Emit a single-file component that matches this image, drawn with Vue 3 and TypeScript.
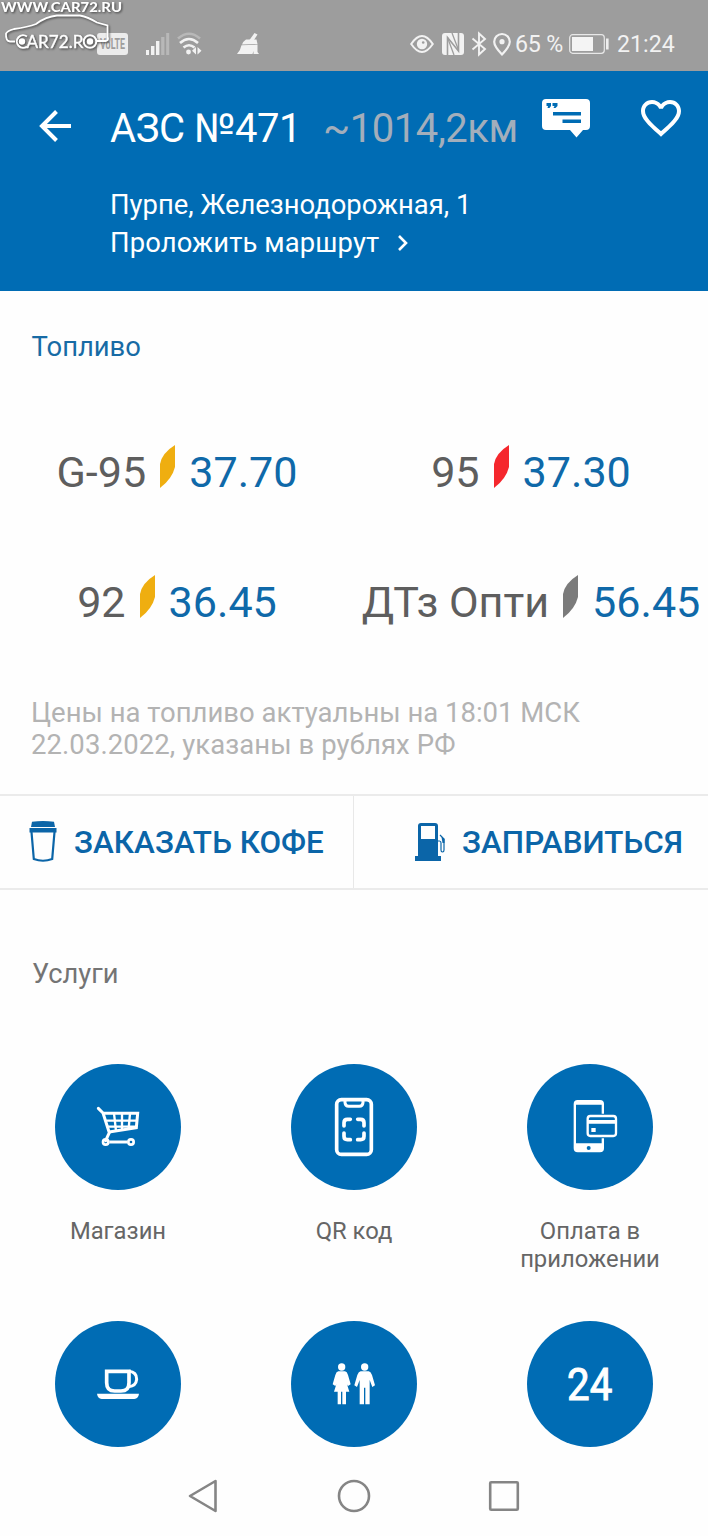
<script setup lang="ts">
interface Fuel {
  name: string
  price: string
  tone: 'gold' | 'red' | 'grey'
}

interface Service {
  id: 'shop' | 'qr' | 'pay' | 'cafe' | 'wc' | 'allday'
  label: string[]
  viewBox: string
}

const fuels: Fuel[] = [
  { name: 'G-95', price: '37.70', tone: 'gold' },
  { name: '95', price: '37.30', tone: 'red' },
  { name: '92', price: '36.45', tone: 'gold' },
  { name: 'ДТз Опти', price: '56.45', tone: 'grey' },
]

const services: Service[] = [
  { id: 'shop', label: ['Магазин'], viewBox: '45 42 378 378' },
  { id: 'qr', label: ['QR код'], viewBox: '33 42 378 378' },
  { id: 'pay', label: ['Оплата в', 'приложении'], viewBox: '51 42 378 378' },
  { id: 'cafe', label: [], viewBox: '45 31 378 378' },
  { id: 'wc', label: [], viewBox: '753 31 378 378' },
  { id: 'allday', label: [], viewBox: '1071 31 378 378' },
]
</script>

<template>
  <div class="screen">
    <div class="status">
      <svg class="volte" width="31" height="22" viewBox="0 0 31 22">
        <rect width="31" height="22" rx="3" fill="#ececec" />
        <text x="3" y="16" font-size="14" font-weight="700" fill="#9d9d9d" textLength="25" lengthAdjust="spacingAndGlyphs">VoLTE</text>
      </svg>
      <svg class="signal" width="24" height="24" viewBox="0 0 24 24">
        <g fill="#f2f2f2">
          <rect x="0" y="18" width="3" height="5" />
          <rect x="5" y="14" width="3.4" height="9" />
          <rect x="10" y="9" width="3.4" height="14" />
        </g>
        <g fill="#b8b8b8">
          <rect x="15.2" y="5" width="3.2" height="18" />
          <rect x="20.2" y="1" width="3" height="22" />
        </g>
      </svg>
      <svg class="wifi" width="26" height="24" viewBox="0 0 26 24" fill="none" stroke-width="2.6">
        <path d="M1 6.500Q12-3 23 6.500" stroke="#b8b8b8" />
        <path d="M3 11Q12 3 21 11M6.500 15.500Q12 11 17.500 15.500" stroke="#f2f2f2" />
        <circle cx="11.500" cy="20" r="2.400" fill="#f2f2f2" />
        <path d="M19 15V22.500L15 18.800ZM20.500 15V22.500L24.500 18.800Z" fill="#f2f2f2" />
      </svg>
      <svg class="broom" width="24" height="22" viewBox="0 0 24 22" fill="#f2f2f2">
        <path d="M17.500 0L20.500 1.500L17 7H12.500Z" />
        <path d="M9 6.500H19.500L20.500 11L5 11.500Q6.500 8 9 6.500Z" />
        <path d="M4.500 12.300L20.500 11.600L20.500 19L22 21H16.500V18L15.500 21H0Q3.500 17.500 4.500 12.300Z" />
      </svg>
      <span class="spacer"></span>
      <svg class="eye" width="24" height="20" viewBox="0 0 24 20">
        <path d="M1.200 10Q12-6 22.800 10Q12 26 1.200 10Z" fill="none" stroke="#f2f2f2" stroke-width="2" />
        <circle cx="12" cy="10" r="5.200" fill="#f2f2f2" />
        <circle cx="13.200" cy="8.500" r="1.300" fill="#9d9d9d" />
      </svg>
      <svg class="nfc" width="22" height="22" viewBox="0 0 22 22">
        <rect width="22" height="22" rx="3" fill="#f2f2f2" />
        <path d="M5.500 22V4.500L16.500 18V0" fill="none" stroke="#9d9d9d" stroke-width="1.600" />
        <path d="M5.500 4.500L12 22M10 0L16.500 17" fill="none" stroke="#9d9d9d" stroke-width="1.300" />
      </svg>
      <svg class="bt" width="16" height="24" viewBox="0 0 16 24">
        <path d="M1.500 6.500L14 17L8 22.500V1.500L14 7L1.500 17.500" fill="none" stroke="#f2f2f2" stroke-width="1.900" />
      </svg>
      <svg class="pin" width="18" height="23" viewBox="0 0 18 23">
        <path d="M9 21.500Q1.200 13.500 1.200 8.800A7.800 7.800 0 0 1 16.800 8.800Q16.800 13.500 9 21.500Z" fill="none" stroke="#f2f2f2" stroke-width="2.200" />
        <circle cx="9" cy="8.700" r="2.600" fill="#f2f2f2" />
      </svg>
      <span class="percent">65 %</span>
      <svg class="battery" width="41" height="20" viewBox="0 0 41 20">
        <rect x=".700" y=".700" width="34.600" height="18.600" rx="3" fill="none" stroke="#e8e8e8" stroke-width="1.200" />
        <rect x="3" y="3" width="21" height="14" fill="#f4f4f4" />
        <rect x="37" y="4.500" width="2.600" height="11" fill="#eeeeee" />
      </svg>
      <span class="clock">21:24</span>
    </div>

    <svg class="stamp" width="135" height="58" viewBox="0 0 135 58">
      <g class="stamp-ink">
        <text x="1" y="11.800" class="stamp-url" textLength="121" lengthAdjust="spacingAndGlyphs">WWW.CAR72.RU</text>
        <path d="M15 41.500H10Q5.500 41 6 33.500Q7 31 14 29Q28 27 36 24Q46 16.500 57 15.500H80Q88 17 97 22.500L107.500 25.500V37Q109 40 106 41H97" fill="none" stroke="#fff" stroke-width="1.800" />
        <path d="M27 36.500A6.300 6.300 0 1 0 27 46.500" fill="none" stroke="#fff" stroke-width="2" />
        <circle cx="22" cy="41.500" r="3.200" fill="#fff" />
        <text x="26.500" y="47.500" class="stamp-name" textLength="57" lengthAdjust="spacingAndGlyphs">AR72.R</text>
        <circle cx="90" cy="41.500" r="6.300" fill="none" stroke="#fff" stroke-width="2" />
        <circle cx="90" cy="41.500" r="3.200" fill="#fff" />
      </g>
    </svg>

    <header class="header">
      <div class="title-row">
        <svg class="back" width="34" height="34" viewBox="0 0 34 34" fill="none" stroke="#fff" stroke-width="4">
          <path d="M33 17H4.500M18.500 2.500L4 17L18.500 31.500" />
        </svg>
        <h1 class="title">АЗС №471</h1>
        <span class="distance">~1014,2км</span>
        <svg class="comment" width="48" height="39" viewBox="0 0 48 39">
          <path d="M4 0H44Q48 0 48 4V27Q48 31 44 31H41L34.500 38.500L28 31H4Q0 31 0 27V4Q0 0 4 0Z" fill="#fff" />
          <path d="M4.500 4H9V7L7.500 9H5.500L6 7H4.500ZM10.500 4H15.500V7L13.500 9H11.500L12.500 7H10.500ZM11 13H39V16.500H11ZM20.500 20.500H39V24H20.500Z" fill="#006cb4" />
        </svg>
        <svg class="heart" width="48" height="48" viewBox="0 0 24 24" fill="#fff">
          <path d="M16.500 3c-1.740 0-3.410.810-4.500 2.090C10.910 3.810 9.240 3 7.500 3 4.420 3 2 5.420 2 8.500c0 3.780 3.400 6.860 8.550 11.540L12 21.350l1.450-1.320C18.600 15.360 22 12.280 22 8.500 22 5.420 19.580 3 16.500 3zm-4.400 15.550l-.1.100-.1-.1C7.140 14.240 4 11.390 4 8.500 4 6.500 5.500 5 7.500 5c1.540 0 3.040.990 3.570 2.360h1.870C13.460 5.990 14.960 5 16.500 5c2 0 3.500 1.500 3.500 3.500 0 2.890-3.140 5.740-7.900 10.050z" />
        </svg>
      </div>
      <p class="address">Пурпе, Железнодорожная, 1</p>
      <p class="route">
        <span>Проложить маршрут</span>
        <svg width="12" height="18" viewBox="0 0 12 18" fill="none" stroke="#fff" stroke-width="2.600">
          <path d="M2 2L9 9L2 16" />
        </svg>
      </p>
    </header>

    <section class="fuel">
      <h2 class="fuel-title">Топливо</h2>
      <div class="fuel-grid">
        <div v-for="fuel in fuels" :key="fuel.name" class="fuel-item">
          <span class="fuel-name">{{ fuel.name }}</span>
          <svg class="leaf" :class="fuel.tone" width="15" height="43" viewBox="0 0 15 43">
            <path d="M0 43V19Q2 8 15 0V22Q12 34 0 43Z" />
          </svg>
          <span class="fuel-price">{{ fuel.price }}</span>
        </div>
      </div>
      <p class="note">
        <span>Цены на топливо актуальны на 18:01 МСК</span><br />
        <span class="note-date">22.03.2022, указаны в рублях РФ</span>
      </p>
    </section>

    <div class="actions">
      <button class="action coffee">
        <svg width="28" height="42" viewBox="0 0 28 42">
          <path d="M3 0.800Q14-.800 25 .800L26 6H2ZM.500 7H27.500V11.500H.500Z" fill="#0b65a8" />
          <path d="M2.500 11L4.800 38Q14 41.500 23.200 38L25.500 11" fill="none" stroke="#0b65a8" stroke-width="2.200" />
        </svg>
        <span>ЗАКАЗАТЬ КОФЕ</span>
      </button>
      <button class="action refuel">
        <svg width="31" height="38" viewBox="0 0 31 38">
          <path d="M3 33V3Q3 0 6 0H20Q23 0 23 3V33H26V38H0V33ZM6 3V16H20V3Z" fill="#0b65a8" fill-rule="evenodd" />
          <path d="M23 18H24.500Q26 18 26 20V27Q26 29 27.500 29Q29 29 29 27V16L25 12" fill="none" stroke="#0b65a8" stroke-width="1.200" />
          <path d="M26.500 14L29.500 16V20H27.500Z" fill="#0b65a8" />
        </svg>
        <span>ЗАПРАВИТЬСЯ</span>
      </button>
    </div>

    <section class="services">
      <h2 class="services-title">Услуги</h2>
      <div class="services-grid">
        <div v-for="service in services" :key="service.id" class="service">
          <svg class="disc" width="126" height="126" :viewBox="service.viewBox">
            <g v-if="service.id === 'shop'" fill="none" stroke="#fff">
              <path d="M175 175L189 189L208 248L197 272" stroke-width="9" stroke-linecap="round" stroke-linejoin="round" />
              <path d="M192 190H293L289 233L207 246" stroke-width="9" />
              <path d="M199 212H292M222 190L228 243M246 190V240M270 190L266 236M203 230H290" stroke-width="7" />
              <path d="M208 276H262" stroke-width="9" />
              <circle cx="197" cy="276" r="8" stroke-width="8" />
              <circle cx="273" cy="276" r="8" stroke-width="8" />
            </g>
            <g v-else-if="service.id === 'qr'" fill="none" stroke="#fff">
              <rect x="170" y="149" width="104" height="164" rx="14" stroke-width="11" />
              <path d="M195 151V158Q196 169 206 169H238Q248 169 249 158V151" stroke-width="9" />
              <path d="M192 228V218Q192 208 202 208H211M233 208H242Q252 208 252 218V228M252 249V259Q252 269 242 269H233M211 269H202Q192 269 192 259V249" stroke-width="11" stroke-linecap="round" />
            </g>
            <g v-else-if="service.id === 'pay'">
              <path d="M203 150H270Q282 150 282 162V295Q282 307 270 307H203Q191 307 191 295V162Q191 150 203 150ZM198 164V280H275V164Z" fill="#fff" fill-rule="evenodd" />
              <circle cx="236" cy="294" r="6" fill="#006cb4" />
              <rect x="226" y="191" width="99" height="74" rx="10" fill="#006cb4" />
              <rect x="233" y="198" width="85" height="60" rx="8" fill="none" stroke="#fff" stroke-width="7" />
              <path d="M233 210H318V221H233ZM244 234H257V246H244Z" fill="#fff" />
            </g>
            <g v-else-if="service.id === 'cafe'">
              <path d="M200 182H267V216Q267 241 243 241H224Q200 241 200 216Z" fill="none" stroke="#fff" stroke-width="11" />
              <path d="M267 182Q290 184 290 206Q288 226 266 228" fill="none" stroke="#fff" stroke-width="9" />
              <path d="M171 249H297Q295 264 283 265H185Q173 264 171 249Z" fill="#fff" />
            </g>
            <g v-else-if="service.id === 'wc'" fill="#fff">
              <circle cx="905" cy="169" r="11" />
              <path d="M895 182H915Q921 183 924 193L932 221L924 226L921 221L928 243H918V281H907V243H903V281H893V243H882L889 221L886 226L878 221L886 193Q889 183 895 182Z" />
              <circle cx="974" cy="169" r="11" />
              <path d="M962 182H986Q992 183 996 193L1005 224L997 229L989 208V281H976V231H972V281H959V208L951 229L943 224L952 193Q956 183 962 182Z" />
            </g>
            <text v-else class="allday" x="1191" y="269" textLength="136" lengthAdjust="spacingAndGlyphs">24</text>
          </svg>
          <p class="service-label">
            <span v-for="line in service.label" :key="line">{{ line }}</span>
          </p>
        </div>
      </div>
    </section>

    <nav class="navbar">
      <svg width="32" height="36" viewBox="0 0 32 36"><path d="M28.500 3V33L3 18Z" /></svg>
      <svg width="36" height="36" viewBox="0 0 36 36"><circle cx="18" cy="18" r="15" /></svg>
      <svg width="32" height="32" viewBox="0 0 32 32"><rect x="2.200" y="2.200" width="27.600" height="27.600" rx="1" /></svg>
    </nav>
  </div>
</template>

<style>
body {
  margin: 0;
  background: #fefefe;
}
</style>

<style scoped>
.screen {
  position: relative;
  width: 708px;
  height: 1536px;
  overflow: hidden;
  display: flex;
  flex-direction: column;
  background: #fefefe;
  font-family: Roboto, 'Noto Sans', sans-serif;
}
h1, h2, p { margin: 0; font-weight: 400; }
svg { flex: none; display: block; overflow: visible; }
span { white-space: nowrap; }

.status {
  flex: none;
  display: flex;
  align-items: center;
  box-sizing: border-box;
  height: 71px;
  padding: 17px 33px 0 97px;
  background: #9d9d9d;
  color: #f2f2f2;
  font-size: 23.2px;
}
.signal { margin-left: 18px; }
.wifi { margin-left: 7px; }
.broom { margin-left: 34px; }
.spacer { flex: 1; }
.nfc { margin-left: 8px; }
.bt { margin-left: 7px; }
.pin { margin-left: 6px; }
.percent { width: 50px; margin-left: 4px; letter-spacing: -0.2px; }
.battery { margin-left: 4px; }
.clock { width: 58px; margin-left: 7px; }

.stamp { position: absolute; left: 0; top: 0; }
.stamp-ink { filter: drop-shadow(1px 1px 1px #444); }
.stamp-url { font: 900 13.5px Lato, sans-serif; fill: #fff; }
.stamp-name { font: 400 17px Lato, sans-serif; fill: #fff; stroke: #fff; stroke-width: 0.4px; }

.header {
  flex: none;
  height: 220px;
  background: #006cb4;
  color: #fff;
}
.title-row { display: flex; height: 115px; padding-left: 38px; }
.back { margin-top: 38px; }
.title {
  width: 213px;
  margin-left: 38px;
  font-size: 40px;
  line-height: 116px;
  letter-spacing: -0.4px;
  white-space: nowrap;
}
.distance {
  width: 219px;
  font-size: 40px;
  line-height: 116px;
  letter-spacing: -0.45px;
  color: #a3aebb;
}
.comment { margin-top: 28px; }
.heart { margin: 23px 0 0 47px; }
.address, .route {
  padding-left: 110px;
  font-size: 27.4px;
  line-height: 38px;
}
.route { display: flex; align-items: center; gap: 18px; letter-spacing: 0.12px; }

.fuel { flex: none; height: 503px; }
.fuel-title {
  padding: 37px 0 0 31.500px;
  font-size: 27.4px;
  line-height: 38px;
  color: #176ba5;
}
.fuel-grid {
  display: grid;
  grid-template-columns: 354px 354px;
  grid-auto-rows: 130px;
  margin-top: 41px;
}
.fuel-item {
  display: flex;
  align-items: center;
  justify-content: center;
  gap: 14px;
  font-size: 43.1px;
}
.fuel-name { color: #5e5e5e; }
.fuel-price { color: #0f69a9; }
.leaf { margin-bottom: 11px; }
.gold { fill: #efae10; }
.red { fill: #f5272d; }
.grey { fill: #7b7b7b; }
.note {
  padding: 30px 0 0 31px;
  font-size: 27.5px;
  line-height: 32px;
  color: #b3b3b3;
}
.note-date { letter-spacing: 0.07px; }

.actions {
  flex: none;
  display: grid;
  grid-template-columns: 354px 354px;
  box-sizing: border-box;
  height: 96px;
  border-top: 2px solid #ebebeb;
  border-bottom: 2px solid #ebebeb;
}
.action {
  display: flex;
  align-items: center;
  padding: 0 0 0 29px;
  border: 0;
  background: none;
  color: #0b65a8;
  font: 500 31.4px Roboto, sans-serif;
}
.coffee { border-right: 1px solid #e8e8e8; }
.coffee span { margin-left: 17px; }
.refuel { padding-left: 61px; }
.refuel span { margin-left: 16px; }

.services { flex: none; height: 566px; }
.services-title {
  padding: 65px 0 0 32px;
  font-size: 27.3px;
  line-height: 38px;
  color: #747474;
}
.services-grid {
  display: grid;
  grid-template-columns: repeat(3, 236px);
  grid-auto-rows: 257px;
  height: 390px;
  margin-top: 71px;
}
.service { display: flex; flex-direction: column; align-items: center; }
.disc { border-radius: 50%; background: #006cb4; }
.allday { font: 400 132px Roboto, sans-serif; fill: #fff; stroke: #fff; stroke-width: 3px; }
.service-label {
  display: flex;
  flex-direction: column;
  align-items: center;
  margin-top: 27px;
  font-size: 23.8px;
  line-height: 28px;
  color: #666;
}

.navbar {
  flex: none;
  display: flex;
  align-items: center;
  justify-content: space-between;
  height: 80px;
  padding: 0 188px 0 187px;
}
.navbar svg { fill: none; stroke: #858585; stroke-width: 2.6; stroke-linejoin: round; }
</style>
